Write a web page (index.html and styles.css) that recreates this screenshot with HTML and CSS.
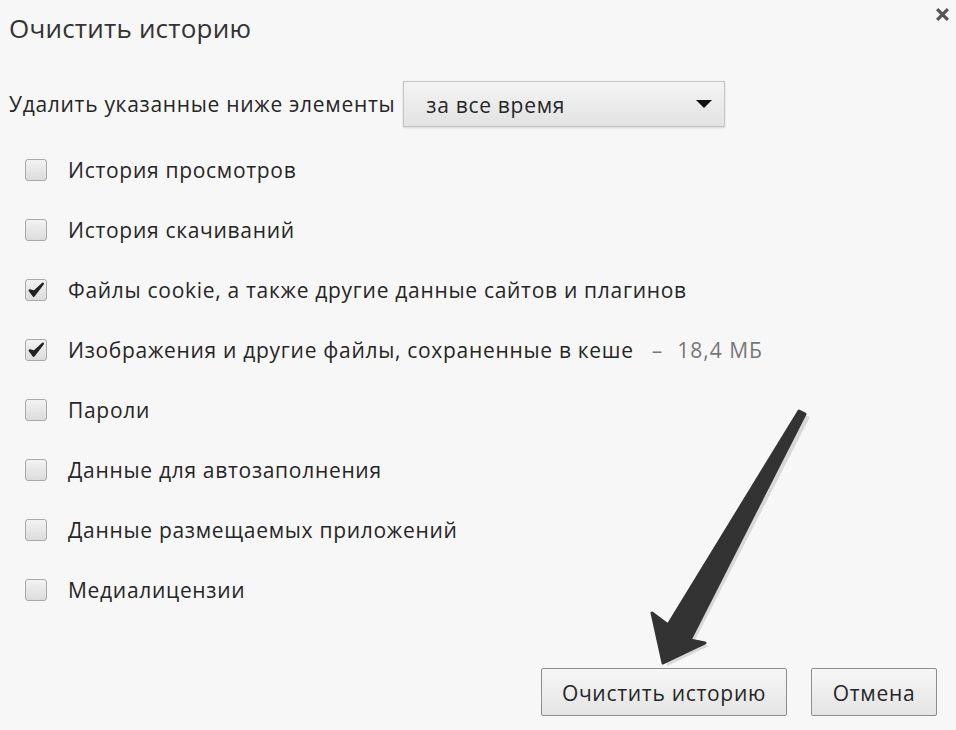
FILE: index.html
```html
<!DOCTYPE html>
<html lang="ru">
<head>
    <meta charset="UTF-8">
    <title>Очистить историю</title>
    <link rel="stylesheet" href="styles.css">
</head>
<body>
    <div class="dialog">
        <div class="close">
            <svg width="15" height="15" viewBox="0 0 14 14"><path d="M2 2 L12 12 M12 2 L2 12" stroke="#555" stroke-width="3"/></svg>
        </div>
        <h1 class="title">Очистить историю</h1>

        <div class="period">
            <span>Удалить указанные ниже элементы</span>
            <div class="select">
                <span>за все время</span>
                <span class="caret"></span>
            </div>
        </div>

        <div class="options">
            <label class="option"><span class="box"></span>История просмотров</label>
            <label class="option"><span class="box"></span>История скачиваний</label>
            <label class="option"><span class="box"><svg width="18" height="18" viewBox="0 0 16 16"><path d="M2.5 8.5 L6 13 L14 2.5 L6.5 9.5 Z" fill="#222" stroke="#222" stroke-width="2.2" stroke-linejoin="round"/></svg></span>Файлы cookie, а также другие данные сайтов и плагинов</label>
            <label class="option"><span class="box"><svg width="18" height="18" viewBox="0 0 16 16"><path d="M2.5 8.5 L6 13 L14 2.5 L6.5 9.5 Z" fill="#222" stroke="#222" stroke-width="2.2" stroke-linejoin="round"/></svg></span>Изображения и другие файлы, сохраненные в кеше<span class="size"><span class="dash">–</span>18,4 МБ</span></label>
            <label class="option"><span class="box"></span>Пароли</label>
            <label class="option"><span class="box"></span>Данные для автозаполнения</label>
            <label class="option"><span class="box"></span>Данные размещаемых приложений</label>
            <label class="option"><span class="box"></span>Медиалицензии</label>
        </div>

        <div class="buttons">
            <button class="btn wide">Очистить историю</button>
            <button class="btn">Отмена</button>
        </div>

        <svg class="arrow" width="180" height="275" viewBox="0 0 180 275">
            <path d="M160 12 L168 15 L52 240 L67 244 L25 264 L13 214 L29 226 Z" fill="#d8d8d8" transform="translate(2,2)"/>
            <path d="M159 11 L165 14 L50 240 L65 243 L23 263 L12 213 L28 225 Z" fill="#333" stroke="#333" stroke-width="3" stroke-linejoin="round"/>
        </svg>
    </div>
</body>
</html>
```

FILE: styles.css
```css
body {
    margin: 0;
    background-color: #f7f7f7;
    font-family: "Open Sans", "Noto Sans", sans-serif;
    color: #262626;
}

.dialog {
    position: relative;
    width: 956px;
    height: 730px;
    padding: 10px 19px 0 9px;
    box-sizing: border-box;
}

.close {
    position: absolute;
    top: 5px;
    right: 6px;
}

.title {
    margin: 0;
    font-size: 26px;
    font-weight: normal;
    letter-spacing: 0.2px;
    color: #333;
    height: 36px;
    line-height: 36px;
}

.period {
    display: flex;
    align-items: center;
    gap: 8px;
    margin-top: 35px;
    font-size: 21px;
    letter-spacing: 0.7px;
}

.select {
    display: flex;
    align-items: center;
    justify-content: space-between;
    width: 322px;
    height: 46px;
    box-sizing: border-box;
    padding: 2px 12px 0 22px;
    border: 1px solid #c4c4c4;
    background: linear-gradient(#f4f4f4, #e2e2e2);
    box-shadow: 0 1px 2px rgba(0, 0, 0, 0.15);
}

.caret {
    width: 0;
    height: 0;
    margin-bottom: 2px;
    border-left: 8px solid transparent;
    border-right: 8px solid transparent;
    border-top: 8px solid #111;
}

.options {
    display: flex;
    flex-direction: column;
    margin-top: 13px;
}

.option {
    display: flex;
    align-items: center;
    height: 60px;
    padding-left: 16px;
    font-size: 21px;
    letter-spacing: 0.7px;
}

.box {
    display: flex;
    align-items: center;
    justify-content: center;
    width: 22px;
    height: 22px;
    box-sizing: border-box;
    margin-right: 21px;
    border: 1px solid #a9a9a9;
    border-radius: 3px;
    background: linear-gradient(#f2f2f2, #dcdcdc);
}

.size {
    margin-left: 18px;
    color: #777;
    letter-spacing: 1px;
}

.dash {
    margin-right: 14px;
}

.buttons {
    display: flex;
    justify-content: flex-end;
    gap: 24px;
    margin-top: 48px;
}

.btn {
    height: 48px;
    width: 126px;
    padding-top: 2px;
    border: 1px solid #8e8e8e;
    border-radius: 2px;
    background: linear-gradient(#f6f6f6, #e4e4e4);
    font-family: "Open Sans", "Noto Sans", sans-serif;
    font-size: 21px;
    letter-spacing: 0.7px;
    color: #262626;
}

.btn.wide {
    width: 246px;
}

.arrow {
    position: absolute;
    left: 640px;
    top: 400px;
}
```
